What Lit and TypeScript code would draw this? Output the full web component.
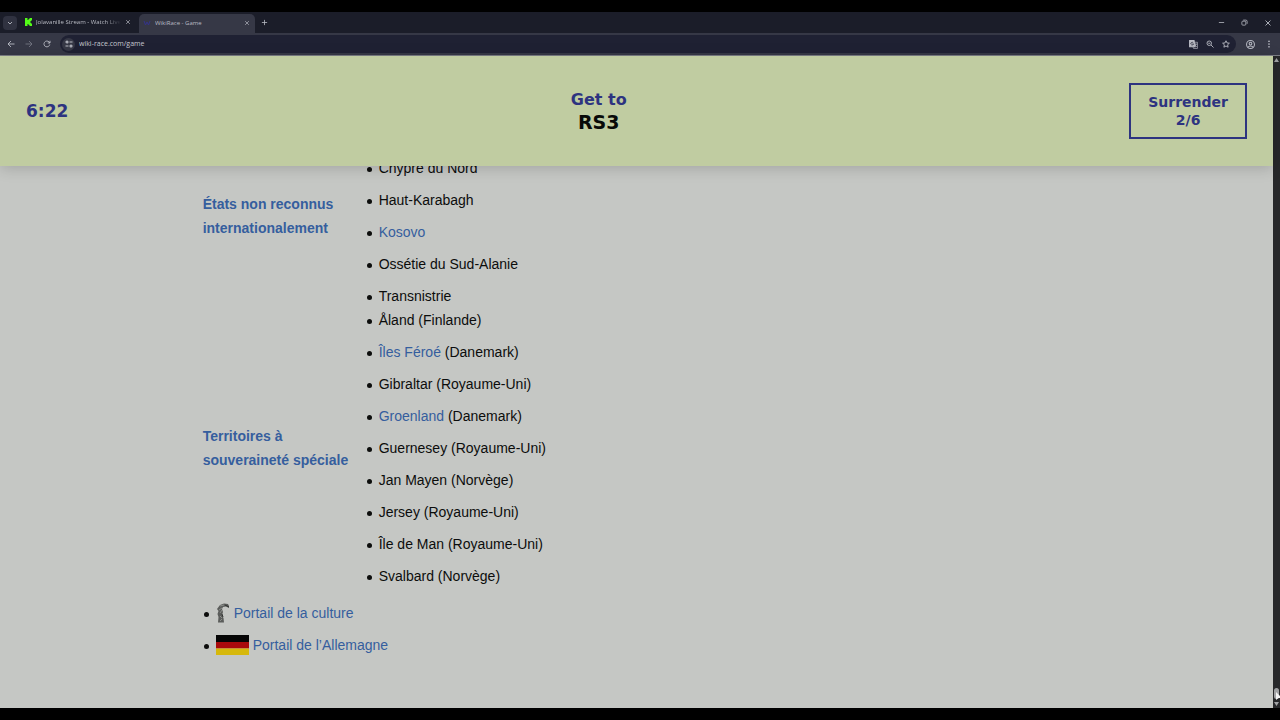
import { LitElement, html, css, svg } from "lit";
import { customElement } from "lit/decorators.js";

interface Place {
  name: string;
  link?: boolean;
  note?: string;
}

const unrecognised: Place[] = [
  { name: "Chypre du Nord" },
  { name: "Haut-Karabagh" },
  { name: "Kosovo", link: true },
  { name: "Ossétie du Sud-Alanie" },
  { name: "Transnistrie" },
];

const territories: Place[] = [
  { name: "Åland", note: "(Finlande)" },
  { name: "Îles Féroé", link: true, note: "(Danemark)" },
  { name: "Gibraltar", note: "(Royaume-Uni)" },
  { name: "Groenland", link: true, note: "(Danemark)" },
  { name: "Guernesey", note: "(Royaume-Uni)" },
  { name: "Jan Mayen", note: "(Norvège)" },
  { name: "Jersey", note: "(Royaume-Uni)" },
  { name: "Île de Man", note: "(Royaume-Uni)" },
  { name: "Svalbard", note: "(Norvège)" },
];

const icon = (shape: unknown, size = 8) => html`<svg
  width=${size}
  height=${size}
  viewBox="0 0 16 16"
  fill="none"
  stroke="currentColor"
  stroke-width="1.8"
  aria-hidden="true"
>${shape}</svg>`;

const shapes = {
  chevron: svg`<path d="M4 6l4 4 4-4" />`,
  close: svg`<path d="M3 3l10 10M13 3L3 13" />`,
  plus: svg`<path d="M8 2v12M2 8h12" />`,
  back: svg`<path d="M15 8H2M8 2L2 8l6 6" />`,
  forward: svg`<path d="M1 8h13M8 2l6 6-6 6" />`,
  reload: svg`<path d="M13.5 9A5.8 5.8 0 1 1 12 3.9L14 6M14 1.5V6H9.5" />`,
  tune: svg`<path d="M9 4h6M1 12h6" stroke-width="2.400" /><circle cx="4" cy="4" r="2" stroke-width="2.200" /><circle cx="12" cy="12" r="2" stroke-width="2.200" />`,
  minimise: svg`<path d="M2 8h12" />`,
  restore: svg`<rect x="2" y="5" width="9" height="9" rx="2" /><path d="M5 2.5h6a3 3 0 0 1 3 3V11" />`,
  translate: svg`<path d="M1 1h8l2 11H1z" fill="currentColor" /><path d="M10 4h5v11H8l-1-3M9.500 7.500h5M12 6v2c0 2-1 3-2.500 4M11 9.500l3 3" stroke-width="1.200" /><path d="M7.500 5A2.400 2.400 0 1 0 8 7H6" stroke="#1f2133" stroke-width="1.200" />`,
  zoom: svg`<circle cx="6.500" cy="6.500" r="4.500" /><path d="M10 10l5 5M4.500 6.500h4" />`,
  star: svg`<path d="M8 1.500l2 4.400 4.800.5-3.600 3.200 1 4.800L8 12l-4.200 2.400 1-4.800L1.200 6.400 6 5.900z" />`,
  person: svg`<circle cx="8" cy="8" r="7" /><circle cx="8" cy="6.300" r="2.400" /><path d="M3.500 13c1.500-3 7.500-3 9 0" />`,
  dots: svg`<g fill="currentColor" stroke="none"><circle cx="8" cy="2.500" r="1.700" /><circle cx="8" cy="8" r="1.700" /><circle cx="8" cy="13.500" r="1.700" /></g>`,
};

@customElement("browser-chrome")
class BrowserChrome extends LitElement {
  static styles = css`
    :host {
      display: block;
      color: #b9bbc4;
      font: 6px/8px "Open Sans", "Noto Sans", sans-serif;
    }
    button {
      display: grid;
      place-items: center;
      flex: none;
      padding: 0;
      border: 0;
      background: none;
      color: inherit;
    }
    svg {
      display: block;
    }
    .tabs {
      display: flex;
      align-items: center;
      height: 21px;
      background: #1b1d29;
    }
    .search {
      width: 14px;
      height: 14px;
      margin: 0 4px 0 3px;
      border-radius: 4px;
      background: #303240;
    }
    .tab {
      display: flex;
      align-items: center;
      gap: 4px;
      box-sizing: border-box;
      width: 118px;
      height: 19px;
      padding: 0 8px 1px 3px;
      border-radius: 5px 5px 0 0;
    }
    .tab.active {
      align-self: flex-end;
      width: 116px;
      padding: 0 5px 2px 4px;
      background: #363846;
    }
    .title {
      flex: 1;
      overflow: hidden;
      white-space: nowrap;
    }
    .title.long {
      mask-image: linear-gradient(90deg, #000 82%, transparent);
    }
    .add {
      margin-left: 6px;
    }
    .window {
      display: flex;
      gap: 16px;
      margin-left: auto;
      padding-right: 8px;
    }
    .toolbar {
      display: flex;
      align-items: center;
      gap: 10px;
      height: 22px;
      padding: 0 7px;
      background: #363846;
    }
    .muted {
      color: #747682;
    }
    .address {
      display: flex;
      flex: 1;
      align-items: center;
      gap: 8px;
      box-sizing: border-box;
      height: 18px;
      margin-left: -1px;
      padding: 0 6px 0 2px;
      border-radius: 9px;
      background: #1f2133;
    }
    .site {
      width: 13px;
      height: 13px;
      border-radius: 50%;
      background: #363846;
    }
    .url {
      flex: 1;
      min-width: 0;
      margin-left: -4px;
      padding: 0;
      border: 0;
      background: none;
      color: #c6c8d0;
      font: 7px/10px "Open Sans", "Noto Sans", sans-serif;
    }
  `;

  render() {
    return html`
      <div class="tabs">
        <button class="search" aria-label="Search tabs">${icon(shapes.chevron)}</button>
        <div class="tab">
          <svg width="8" height="8" viewBox="0 0 8 8" fill="#53fc18" aria-hidden="true">
            <path d="M1 0h2.500v2h1V1h1V0H8v2.500H7v1H6v1h1v1h1V8H5.500V7h-1V6h-1v2H1z" />
          </svg>
          <span class="title long">Jolavanille Stream - Watch Live</span>
          <button aria-label="Close tab">${icon(shapes.close, 6)}</button>
        </div>
        <div class="tab active">
          <svg width="8" height="8" viewBox="0 0 8 8" fill="none" stroke="#34338a" aria-hidden="true">
            <path d="M1 2l1.500 4L4 3l1.500 3L7 2" />
          </svg>
          <span class="title">WikiRace - Game</span>
          <button aria-label="Close tab">${icon(shapes.close, 6)}</button>
        </div>
        <button class="add" aria-label="New tab">${icon(shapes.plus, 7)}</button>
        <div class="window">
          <button aria-label="Minimise">${icon(shapes.minimise, 7)}</button>
          <button aria-label="Restore">${icon(shapes.restore, 7)}</button>
          <button aria-label="Close">${icon(shapes.close, 8)}</button>
        </div>
      </div>
      <div class="toolbar">
        <button aria-label="Back">${icon(shapes.back)}</button>
        <button class="muted" aria-label="Forward">${icon(shapes.forward)}</button>
        <button aria-label="Reload">${icon(shapes.reload)}</button>
        <div class="address">
          <button class="site" aria-label="Site information">${icon(shapes.tune)}</button>
          <input class="url" type="text" aria-label="Address" value="wiki-race.com/game" />
          <button aria-label="Translate">${icon(shapes.translate, 9)}</button>
          <button aria-label="Zoom">${icon(shapes.zoom)}</button>
          <button aria-label="Bookmark">${icon(shapes.star)}</button>
        </div>
        <button aria-label="Profile">${icon(shapes.person, 9)}</button>
        <button aria-label="Menu">${icon(shapes.dots)}</button>
      </div>
    `;
  }
}

@customElement("app-root")
class AppRoot extends LitElement {
  static styles = css`
    :host {
      display: flex;
      flex-direction: column;
      box-sizing: border-box;
      height: 100vh;
      padding: 12px 0;
      background: #000;
      overflow: hidden;
    }
    .view {
      display: flex;
      flex: 1;
      min-height: 0;
      border-top: 1px solid #7c7e85;
    }
    .page {
      display: flex;
      flex: 1;
      flex-direction: column;
      min-width: 0;
      background: #c5c7c4;
    }
    .bar {
      position: relative;
      display: flex;
      align-items: center;
      justify-content: space-between;
      box-sizing: border-box;
      height: 110px;
      padding: 0 26px;
      background: #c0cca1;
      box-shadow: 0 2px 14px rgb(0 0 0 / 18%);
      color: #2d3380;
      font: bold 16px/22px "DejaVu Sans", sans-serif;
    }
    .timer {
      font-size: 17px;
    }
    .goal {
      margin: 0;
      text-align: center;
    }
    .target {
      display: block;
      color: #080a08;
      font-size: 19px;
    }
    .surrender {
      padding: 8px 17px;
      border: 2px solid #2d3380;
      background: none;
      color: inherit;
      font: bold 14px/18px "DejaVu Sans", sans-serif;
    }
    .article {
      display: flex;
      flex: 1;
      flex-direction: column;
      justify-content: flex-end;
      min-height: 0;
      padding: 0 calc(16% - 1px) 51px;
      overflow: hidden;
      color: #0c0d0c;
      font: 14px/24px "Liberation Sans", Arial, sans-serif;
    }
    table {
      flex: none;
      border-collapse: collapse;
    }
    th {
      width: 160px;
      padding: 0;
      text-align: left;
      vertical-align: middle;
    }
    td {
      padding: 0;
    }
    a {
      color: #355e9e;
      text-decoration: none;
    }
    ul {
      display: flex;
      flex-direction: column;
      gap: 8px;
      margin: 0;
      padding: 0 0 0 4px;
      list-style: none;
    }
    li {
      display: flex;
      align-items: center;
    }
    li::before {
      content: "";
      flex: none;
      width: 5px;
      height: 5px;
      margin: 2px 7px 0 0;
      border-radius: 50%;
      background: currentColor;
    }
    .continued {
      padding-top: 32px;
    }
    .portals {
      margin-top: 13px;
      padding-left: 1px;
    }
    .portal {
      display: flex;
      align-items: center;
      gap: 4px;
    }
    .scrollbar {
      display: flex;
      flex-direction: column;
      align-items: center;
      justify-content: space-between;
      width: 7px;
      padding: 2px 0;
      background: #27282a;
    }
    .scrollbar svg {
      display: block;
    }
    .thumb {
      width: 5px;
      height: 11px;
      margin: auto 0 3px;
      border-radius: 3px;
      background: #a2a3a5;
    }
    .cursor {
      position: absolute;
      right: 0;
      bottom: 19px;
    }
  `;

  private places(items: Place[], extra = "") {
    return html`<ul class=${extra}>
      ${items.map(
        (p) =>
          html`<li><span>${p.link ? html`<a href="#">${p.name}</a>` : p.name}${p.note ? ` ${p.note}` : ""}</span></li>`
      )}
    </ul>`;
  }

  render() {
    return html`
      <browser-chrome></browser-chrome>
      <div class="view">
        <div class="page">
          <header class="bar">
            <time class="timer">6:22</time>
            <p class="goal">Get to<span class="target">RS3</span></p>
            <button class="surrender">Surrender<br />2/6</button>
          </header>
          <main class="article">
            <table>
              <tbody>
                <tr>
                  <th scope="row"><a href="#">États non reconnus internationalement</a></th>
                  <td>${this.places(unrecognised, "continued")}</td>
                </tr>
                <tr>
                  <th scope="row"><a href="#">Territoires à souveraineté spéciale</a></th>
                  <td>${this.places(territories)}</td>
                </tr>
              </tbody>
            </table>
            <ul class="portals">
              <li>
                <div class="portal">
                  <svg width="14" height="20" viewBox="0 0 14 20" aria-hidden="true">
                    <path d="M1 6l3-4 4-1.500 4 .5 1 2v2l-3-1.500-3 .5-1 2 1 3-1 3 1.500 3 .5 4.500H2l.5-5.500-1-3 1-3z" fill="#5b5d5b" />
                    <path d="M4 3l4-1M3 7l3-2M4 10l2-3M4 13l2 2M4 18l2-2" stroke="#8d8f8c" fill="none" />
                    <path d="M9 2l4 2M6 11l1 3" stroke="#303230" fill="none" />
                  </svg>
                  <a href="#">Portail de la culture</a>
                </div>
              </li>
              <li>
                <div class="portal">
                  <svg width="33" height="20" viewBox="0 0 33 20" aria-hidden="true">
                    <path fill="#050505" d="M0 0h33v7H0z" />
                    <path fill="#a80a0c" d="M0 7h33v6.500H0z" />
                    <path fill="#d6b80c" d="M0 13.500h33V20H0z" />
                  </svg>
                  <a href="#">Portail de l’Allemagne</a>
                </div>
              </li>
            </ul>
          </main>
        </div>
        <div class="scrollbar">
          <svg width="5" height="4" viewBox="0 0 5 4" fill="#a2a3a5" aria-hidden="true"><path d="M0 4l2.500-4L5 4z" /></svg>
          <div class="thumb"></div>
          <svg width="5" height="4" viewBox="0 0 5 4" fill="#a2a3a5" aria-hidden="true"><path d="M0 0h5L2.500 4z" /></svg>
        </div>
      </div>
      <svg class="cursor" width="4" height="9" viewBox="0 0 4 9" aria-hidden="true">
        <path d="M0 0l4 4v2H2.500L0 8z" fill="#f4f4f4" />
      </svg>
    `;
  }
}
